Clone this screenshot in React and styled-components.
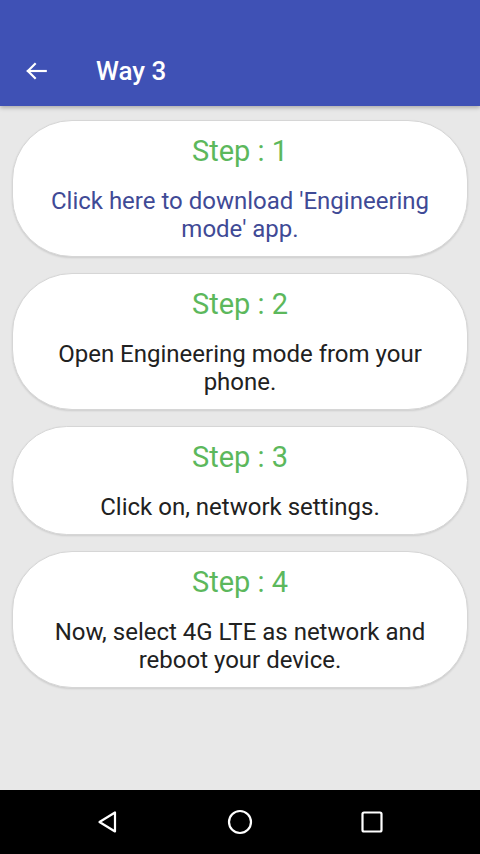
import styled, { createGlobalStyle } from 'styled-components';

const GlobalStyle = createGlobalStyle`
  html, body, #root {
    margin: 0;
    padding: 0;
    height: 100%;
  }
  body {
    font-family: Roboto, 'Noto Sans', sans-serif;
    background: #e8e8e8;
  }
`;

const steps = [
  { n: 1, text: "Click here to download 'Engineering mode' app.", link: true },
  { n: 2, text: 'Open Engineering mode from your phone.' },
  { n: 3, text: 'Click on, network settings.' },
  { n: 4, text: 'Now, select 4G LTE as network and reboot your device.' },
];

const App = () => {
  return (
    <Screen>
      <GlobalStyle />
      <Toolbar>
        <BackButton>
          <svg width="26" height="26" viewBox="0 0 24 24" fill="none" stroke="#fff" strokeWidth="2" strokeLinecap="square">
            <path d="M21 12H4.5" />
            <path d="M11 5.5L4.5 12L11 18.5" />
          </svg>
        </BackButton>
        <Title>Way 3</Title>
      </Toolbar>

      <Content>
        {steps.map((s) => (
          <Card key={s.n}>
            <StepTitle>Step : {s.n}</StepTitle>
            <StepText $link={s.link}>{s.text}</StepText>
          </Card>
        ))}
      </Content>

      <NavBar>
        <NavIcon>
          <svg width="26" height="26" viewBox="0 0 26 26" fill="none" stroke="#fff" strokeWidth="2.2" strokeLinejoin="round">
            <path d="M20 3.5V22.5L4.5 13Z" />
          </svg>
        </NavIcon>
        <NavIcon>
          <svg width="26" height="26" viewBox="0 0 26 26" fill="none" stroke="#fff" strokeWidth="2.2">
            <circle cx="13" cy="13" r="11" />
          </svg>
        </NavIcon>
        <NavIcon>
          <svg width="26" height="26" viewBox="0 0 26 26" fill="none" stroke="#fff" strokeWidth="2.2">
            <rect x="3.5" y="3.5" width="19" height="19" rx="1.5" />
          </svg>
        </NavIcon>
      </NavBar>
    </Screen>
  );
};

const Screen = styled.div`
  display: flex;
  flex-direction: column;
  height: 100vh;
  background: #e8e8e8;
`;

const Toolbar = styled.header`
  height: 106px;
  flex-shrink: 0;
  background: #3f51b5;
  display: flex;
  align-items: center;
  padding-top: 36px;
  box-sizing: border-box;
  box-shadow: 0 2px 4px rgba(0, 0, 0, 0.25);
  z-index: 1;
`;

const BackButton = styled.div`
  width: 26px;
  height: 26px;
  margin-left: 23px;
  display: flex;
`;

const Title = styled.h1`
  margin: 0 0 0 47px;
  color: #fff;
  font-size: 26px;
  font-weight: 500;
`;

const Content = styled.main`
  flex: 1;
  display: flex;
  flex-direction: column;
  gap: 16px;
  padding: 14px 12px;
`;

const Card = styled.div`
  background: #fff;
  border: 1px solid #d6d6d6;
  border-radius: 60px;
  box-shadow: 0 1px 2px rgba(0, 0, 0, 0.12);
  padding: 13px 30px 13px;
  text-align: center;
  display: flex;
  flex-direction: column;
  gap: 18px;
`;

const StepTitle = styled.div`
  color: #5cb85c;
  font-size: 29px;
  line-height: 35px;
`;

const StepText = styled.div`
  color: ${(p) => (p.$link ? '#3f4a96' : '#212121')};
  font-size: 24px;
  line-height: 28px;
`;

const NavBar = styled.nav`
  height: 64px;
  flex-shrink: 0;
  background: #000;
  display: flex;
  justify-content: center;
  align-items: center;
  gap: 106px;
`;

const NavIcon = styled.div`
  width: 26px;
  height: 26px;
  display: flex;
`;

export default App;
